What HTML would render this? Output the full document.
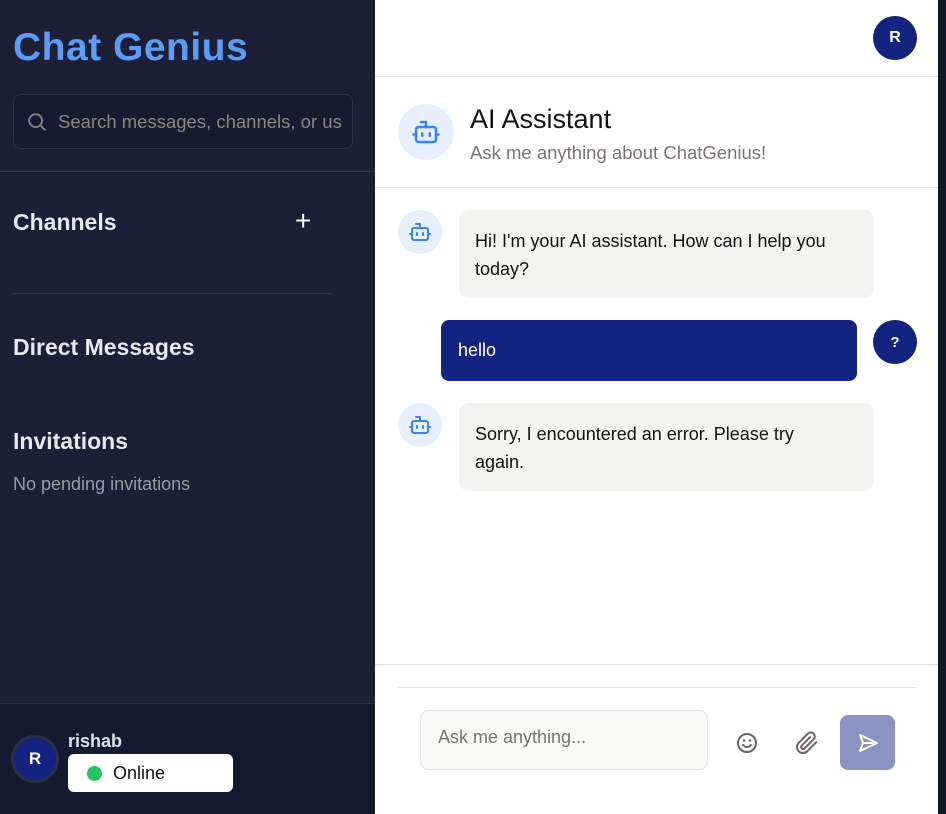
<!DOCTYPE html>
<html><head><style>
*{box-sizing:border-box;margin:0;padding:0}
body{width:946px;height:814px;overflow:hidden;background:#111827;font-family:"Liberation Sans",sans-serif;position:relative}
.sb{position:absolute;left:0;top:0;width:375px;height:814px;background:#1c1f35}
.logo{position:absolute;left:13px;top:26px;font-size:39px;font-weight:900;color:#5b9cf8;letter-spacing:0.5px}
.search{position:absolute;left:13px;top:94px;width:340px;height:55px;border:1px solid #2f3245;border-radius:8px;background:#181b2f;color:#8a8585;font-size:18.5px;padding:16px 0 0 44px;white-space:nowrap;overflow:hidden}
.hr{position:absolute;height:1px;background:#30334a}
.h{position:absolute;left:13px;color:#e8e8ee;font-size:23px;font-weight:bold}
.foot{position:absolute;left:0;top:703px;width:375px;height:111px;background:#161a30;border-top:1px solid #30334a}
.main{position:absolute;left:375px;top:0;width:563px;height:814px;background:#fff}
.av{position:absolute;border-radius:50%;background:#13237f;color:#fff;font-weight:bold;display:flex;align-items:center;justify-content:center}
.bot{position:absolute;border-radius:50%;background:#e8effc;display:flex;align-items:center;justify-content:center}
.bub{position:absolute;background:#f3f3f2;border-radius:10px;font-size:18px;color:#111;line-height:28px;padding:17px 16px}
</style></head><body>
<div class="sb">
<div class="logo">Chat Genius</div>
<div class="search"><svg style="position:absolute;left:12px;top:16px" width="22" height="22" viewBox="0 0 24 24" fill="none" stroke="#8a8585" stroke-width="2"><circle cx="10.5" cy="10.5" r="7"/><path d="M16 16l5 5"/></svg>Search messages, channels, or us</div>
<div class="hr" style="left:0;top:171px;width:375px"></div>
<div class="h" style="top:209px">Channels</div>
<div style="position:absolute;left:295px;top:205px;color:#fff;font-size:28px;font-weight:300">+</div>
<div class="hr" style="left:13px;top:293px;width:318px"></div>
<div class="h" style="top:334px">Direct Messages</div>
<div class="h" style="top:428px">Invitations</div>
<div style="position:absolute;left:13px;top:474px;color:#9a9aa8;font-size:18px">No pending invitations</div>
<div class="foot">
<div class="av" style="left:11px;top:31px;width:48px;height:48px;border:3px solid #2c3047;font-size:17px">R</div>
<div style="position:absolute;left:68px;top:27px;color:#e0e0e8;font-size:18px;font-weight:bold">rishab</div>
<div style="position:absolute;left:68px;top:50px;width:165px;height:38px;background:#fff;border-radius:6px;font-size:18px;color:#111;padding:9px 0 0 45px"><span style="position:absolute;left:19px;top:12px;width:15px;height:15px;border-radius:50%;background:#22c55e"></span>Online</div>
</div>
</div>
<div class="main">
<div class="av" style="left:498px;top:16px;width:44px;height:44px;font-size:16px">R</div>
<div style="position:absolute;left:0;top:76px;width:563px;height:1px;background:#e2e2e2"></div>
<div class="bot" style="left:23px;top:104px;width:56px;height:56px"><svg width="30" height="30" viewBox="0 0 24 24" fill="none" stroke="#3b82f6" stroke-width="2" stroke-linecap="round" stroke-linejoin="round"><path d="M12 8V4H8"/><rect x="4" y="8" width="16" height="12" rx="2"/><path d="M2 14h2M20 14h2M9 13v2M15 13v2"/></svg></div>
<div style="position:absolute;left:95px;top:104px;font-size:27px;color:#111">AI Assistant</div>
<div style="position:absolute;left:95px;top:142px;font-size:18.5px;color:#7a7474">Ask me anything about ChatGenius!</div>
<div style="position:absolute;left:0;top:187px;width:563px;height:1px;background:#e2e2e2"></div>
<div class="bot" style="left:23px;top:210px;width:44px;height:44px"><svg width="24" height="24" viewBox="0 0 24 24" fill="none" stroke="#3b82f6" stroke-width="2" stroke-linecap="round" stroke-linejoin="round"><path d="M12 8V4H8"/><rect x="4" y="8" width="16" height="12" rx="2"/><path d="M2 14h2M20 14h2M9 13v2M15 13v2"/></svg></div>
<div class="bub" style="left:84px;top:210px;width:415px;height:88px">Hi! I'm your AI assistant. How can I help you<br>today?</div>
<div style="position:absolute;left:66px;top:320px;width:416px;height:61px;background:#13237f;border-radius:8px;color:#fff;font-size:18px;padding:20px 17px">hello</div>
<div class="av" style="left:498px;top:320px;width:44px;height:44px;font-size:15px">?</div>
<div class="bot" style="left:23px;top:403px;width:44px;height:44px"><svg width="24" height="24" viewBox="0 0 24 24" fill="none" stroke="#3b82f6" stroke-width="2" stroke-linecap="round" stroke-linejoin="round"><path d="M12 8V4H8"/><rect x="4" y="8" width="16" height="12" rx="2"/><path d="M2 14h2M20 14h2M9 13v2M15 13v2"/></svg></div>
<div class="bub" style="left:84px;top:403px;width:415px;height:88px">Sorry, I encountered an error. Please try<br>again.</div>
<div style="position:absolute;left:0;top:664px;width:563px;height:1px;background:#e2e2e2"></div>
<div style="position:absolute;left:23px;top:687px;width:519px;height:1px;background:#e2e2e2"></div>
<div style="position:absolute;left:45px;top:710px;width:288px;height:60px;background:#f8f8f7;border:1px solid #e4e4e4;border-radius:8px;font-size:18px;color:#7a7474;padding:16px 17px">Ask me anything...</div>
<svg style="position:absolute;left:360px;top:731px" width="24" height="24" viewBox="0 0 24 24" fill="none" stroke="#6b6666" stroke-width="2" stroke-linecap="round"><circle cx="12" cy="12" r="9"/><path d="M8 14s1.5 2 4 2 4-2 4-2"/><path d="M9 9.5h.01M15 9.5h.01" stroke-width="2.5"/></svg>
<svg style="position:absolute;left:420px;top:731px" width="24" height="24" viewBox="0 0 24 24" fill="none" stroke="#6b6666" stroke-width="2" stroke-linecap="round" stroke-linejoin="round"><path d="M21.4 11.1l-9.2 9.2a6 6 0 01-8.5-8.5l9.2-9.2a4 4 0 015.7 5.7l-9.2 9.2a2 2 0 01-2.8-2.8l8.5-8.5"/></svg>
<div style="position:absolute;left:465px;top:715px;width:55px;height:55px;background:#8a93c4;border-radius:8px;display:flex;align-items:center;justify-content:center"><svg width="24" height="24" viewBox="0 0 24 24" fill="none" stroke="#fff" stroke-width="2" stroke-linejoin="round"><path d="M4 4l17 8-17 8 3-8z M7 12h14"/></svg></div>
</div>
</body></html>
